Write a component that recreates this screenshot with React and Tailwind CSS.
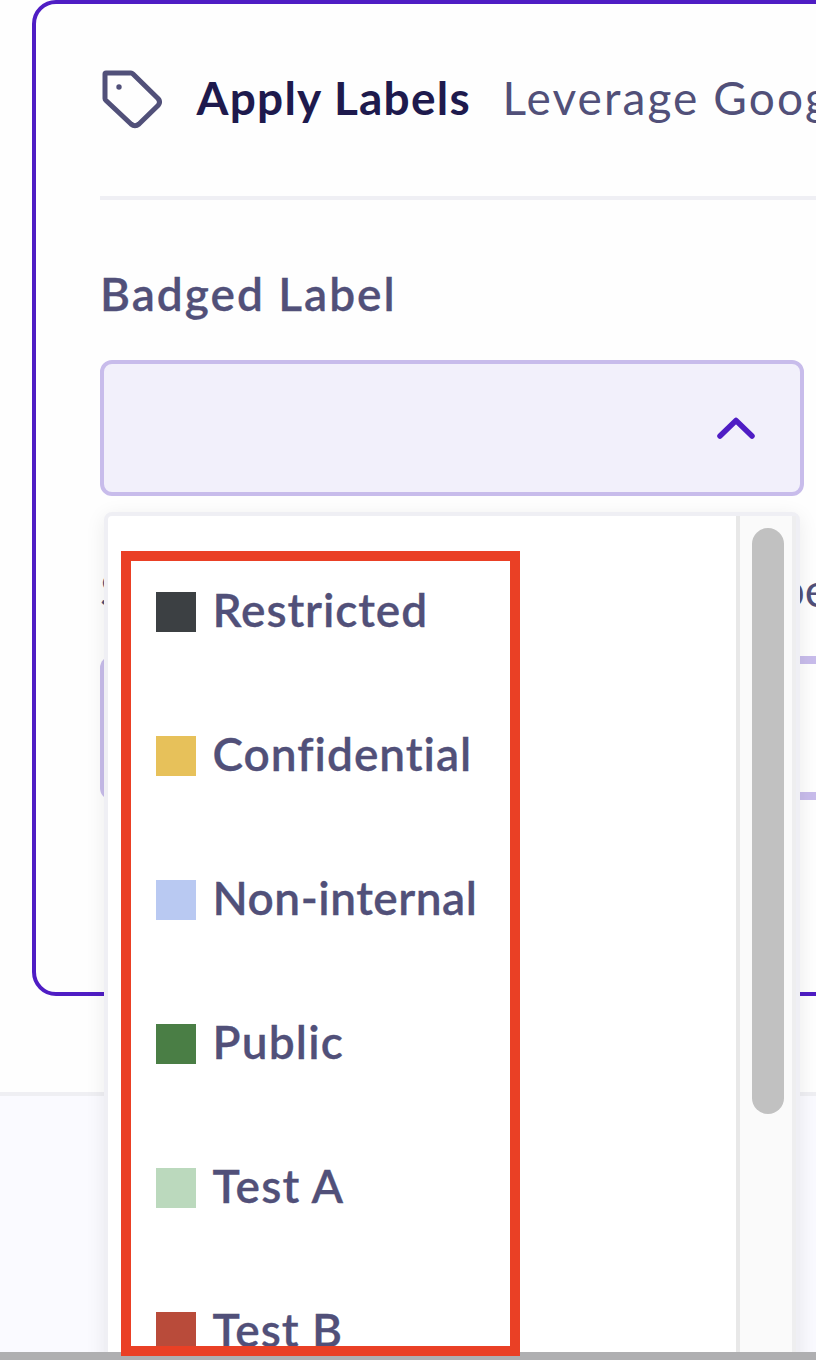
const labels = [
  { name: 'Restricted', swatch: 'bg-[#3c4043]', tracking: 'tracking-[0.9px]' },
  { name: 'Confidential', swatch: 'bg-[#e7c15a]', tracking: 'tracking-[1px]' },
  { name: 'Non-internal', swatch: 'bg-[#b9c9f2]', tracking: 'tracking-[0.5px]' },
  { name: 'Public', swatch: 'bg-[#4a7e45]', tracking: 'tracking-[1.2px]' },
  { name: 'Test A', swatch: 'bg-[#bbd9bd]', tracking: 'tracking-[1.2px]' },
  { name: 'Test B', swatch: 'bg-[#b94b3a]', tracking: 'tracking-[1px]' },
];

function TagIcon() {
  return (
    <svg className="ml-[1.5px] h-[60px] w-[60px] shrink-0" viewBox="0 0 60 60" fill="none">
      <path
        d="M4 3H29Q30 3 31 4L56 28.500Q59 32 56 35.500L37 54Q33 57.500 29 54L4 30.500Q3 29.500 3 28.500V4Q3 3 4 3Z"
        stroke="#515079"
        strokeWidth="5"
        strokeLinejoin="round"
      />
      <circle cx="17" cy="17" r="2.700" fill="#515079" />
    </svg>
  );
}

function LabelMenu() {
  return (
    <div className="absolute left-[104px] top-[512px] flex h-[860px] w-[696px] rounded-t-[8px] border-4 border-[#efeff4] bg-white shadow-[0_4px_20px_rgba(0,0,0,0.08)]">
      <div className="flex grow flex-col gap-[104px] pl-12 pt-[76px]">
        {labels.map((l) => (
          <div key={l.name} className="flex h-10 items-center gap-[16.5px]">
            <span className={`h-10 w-10 shrink-0 ${l.swatch}`} />
            <span className={`whitespace-nowrap pb-[4px] text-[46px] font-semibold leading-[56px] [-webkit-text-stroke:0.3px_#515079] ${l.tracking}`}>{l.name}</span>
          </div>
        ))}
      </div>
      <div className="flex w-[60px] shrink-0 justify-center border-x-4 border-l-[#e8e8e8] border-r-[#eeeeef] bg-[#fafafa] pt-3">
        <div className="ml-1 h-[586px] w-8 rounded-full bg-[#c1c1c1]" />
      </div>
    </div>
  );
}

export default function App() {
  return (
    <div className="relative flex h-[1360px] w-[816px] flex-col overflow-hidden bg-[#fefefe] font-['Lato',sans-serif] text-[#515079]">
      <section className="ml-8 h-[996px] w-[900px] shrink-0 rounded-[24px] border-4 border-[#4f1dc4] pl-16">
        <header className="flex h-48 items-center whitespace-nowrap text-[46px] leading-[56px]">
          <TagIcon />
          <h1 className="ml-[35px] w-[306px] shrink-0 pb-[4px] font-bold tracking-[1.25px] text-[#1e1a4d]">Apply Labels</h1>
          <p className="pb-[4px] tracking-[2.1px]">Leverage Goog</p>
        </header>
        <div className="h-1 bg-[#efeff4]" />
        <h2 className="pb-[1px] pt-[66px] text-[46px] font-semibold leading-[56px] tracking-[2px] [-webkit-text-stroke:0.3px_#515079]">Badged Label</h2>
        <div className="mt-[37px] flex h-[136px] w-[704px] items-center justify-end rounded-[12px] border-4 border-[#c8bceb] bg-[#f2f0fb] pr-11">
          <svg className="h-6 w-10" viewBox="0 0 40 24" fill="none">
            <path d="M4 20L20 4.500L36 20" stroke="#4f1dc4" strokeWidth="5.500" strokeLinecap="round" strokeLinejoin="round" />
          </svg>
        </div>
        <div className="mt-[66px] flex h-[56px] w-[729px] justify-between text-[46px] leading-[56px]">
          <span>S</span>
          <span>pe</span>
        </div>
        <div className="mt-[38px] h-[144px] rounded-[12px] border-y-8 border-l-4 border-[#c8bceb]" />
      </section>
      <div className="mt-24 grow border-t-4 border-[#efeff3] bg-[#fafaff]" />
      <LabelMenu />
      <div className="absolute bottom-0 left-0 h-2 w-full bg-[#afafb1]" />
      <div className="absolute left-[121px] top-[551px] h-[805px] w-[399px] border-[10px] border-[#ea4025]" />
    </div>
  );
}
